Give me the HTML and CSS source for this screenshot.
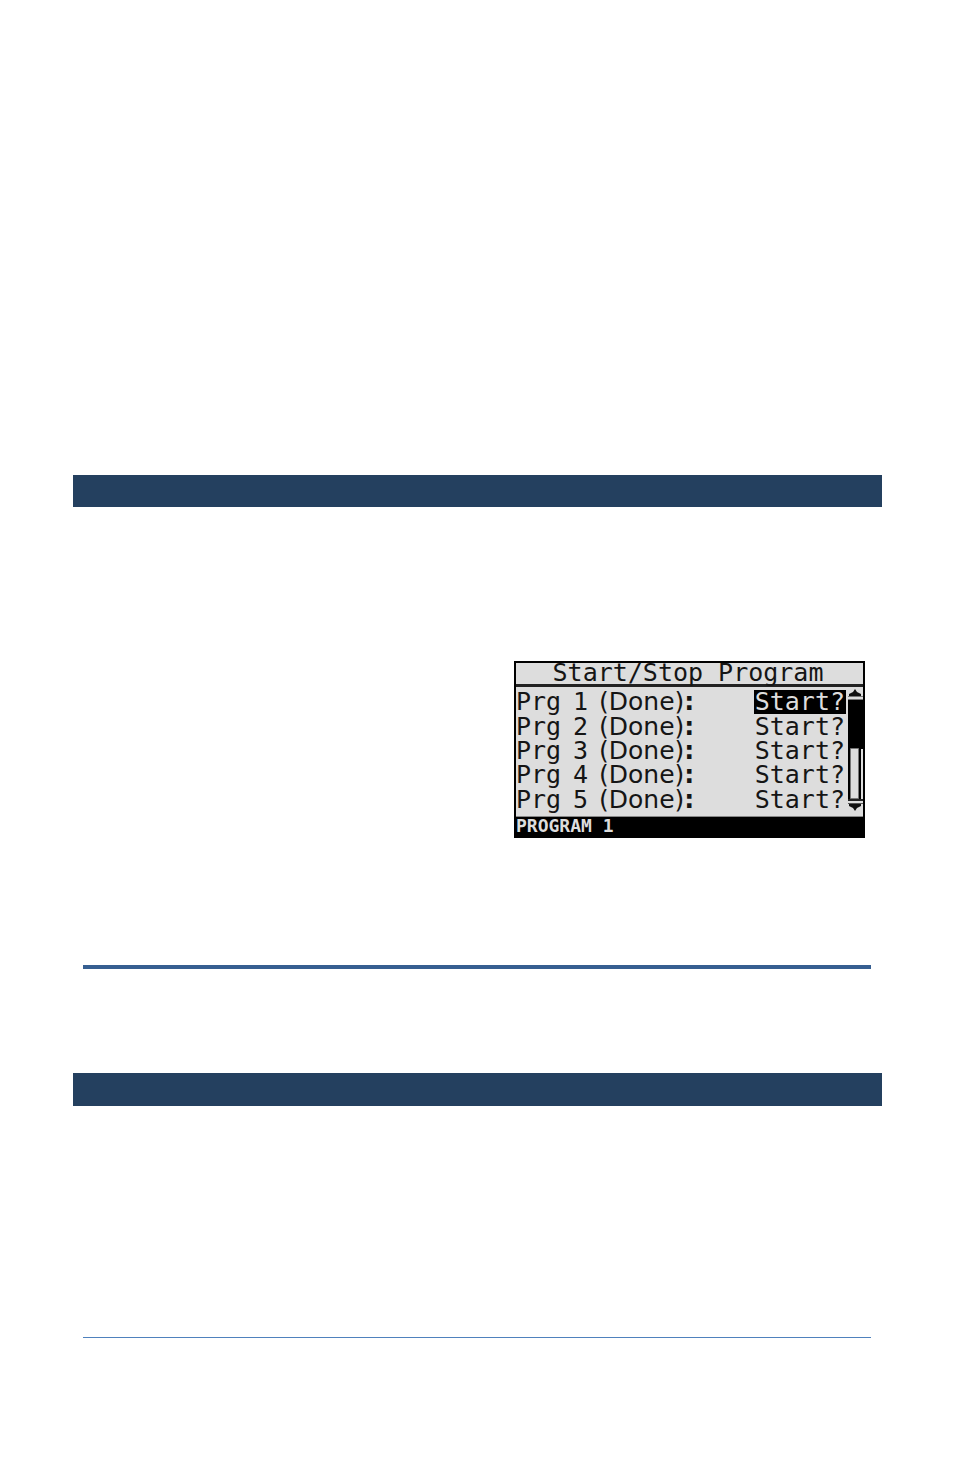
FILE: index.html
```html
<!DOCTYPE html>
<html lang="en">
<head>
<meta charset="utf-8">
<title>Start/Stop Program</title>
<link rel="stylesheet" href="styles.css">
</head>
<body>
<main class="page">
  <div class="band"></div>
  <section class="device" aria-label="Controller display">
    <h1 class="title">Start/Stop Program</h1>
    <div class="panel">
      <ul class="programs">
        <li class="row"><span class="name">Prg</span><span class="num">1</span><span class="state">(Done)<b>:</b></span><button class="action selected">Start?</button></li>
        <li class="row"><span class="name">Prg</span><span class="num">2</span><span class="state">(Done)<b>:</b></span><button class="action">Start?</button></li>
        <li class="row"><span class="name">Prg</span><span class="num">3</span><span class="state">(Done)<b>:</b></span><button class="action">Start?</button></li>
        <li class="row"><span class="name">Prg</span><span class="num">4</span><span class="state">(Done)<b>:</b></span><button class="action">Start?</button></li>
        <li class="row"><span class="name">Prg</span><span class="num">5</span><span class="state">(Done)<b>:</b></span><button class="action">Start?</button></li>
      </ul>
      <svg class="scroll" viewBox="0 0 16 129" aria-hidden="true">
        <path d="M8 2l2 3 4 2v2H2V7l4-2z" fill="#111"/>
        <path d="M1 9h15v1H1zM1 12h15v1H1z" fill="#777"/>
        <path d="M1 13h15v49h-2v51H1z" fill="#000"/>
        <path d="M3.500 61.500h8v50h-8z" fill="#ddd" stroke="#777"/>
        <path d="M1 112h15v2H1z" fill="#222"/>
        <path d="M1 116h15v1H1z" fill="#555"/>
        <path d="M2 117h12v2l-4 2-2 3-2-3-4-2z" fill="#111"/>
      </svg>
    </div>
    <p class="status">PROGRAM 1</p>
  </section>
  <hr class="rule">
  <div class="band second"></div>
  <hr class="rule thin">
</main>
</body>
</html>
```
FILE: styles.css
```css
* { box-sizing: border-box; }
body {
  margin: 0;
  background: #fff;
}
.page {
  display: flex;
  flex-direction: column;
  padding: 475px 72px 136px 73px;
}
.band {
  height: 32px;
  background: #24405f;
}
.device {
  align-self: flex-end;
  width: 351px;
  margin: 154px 17px 127px 0;
  border: 2px solid #000;
  background: #ddd;
  color: #151515;
  font: 25px/24px "DejaVu Sans Mono", monospace;
}
.title {
  margin: 0;
  padding-right: 3px;
  height: 24px;
  border-bottom: 3px solid #222;
  font: inherit;
  line-height: 20px;
  text-align: center;
}
.panel {
  display: flex;
  height: 130px;
  border-bottom: 1px solid #888;
}
.programs {
  flex: 1;
  display: grid;
  grid-template-rows: repeat(5, 1fr);
  margin: 0;
  padding: 3px 1px 4px 0;
  list-style: none;
}
.row {
  display: grid;
  grid-template-columns: 57px 26px 1fr auto;
  align-items: center;
}
.state { font-family: "DejaVu Sans", sans-serif; }
.action {
  height: 24px;
  padding: 0 1px;
  border: 0;
  background: none;
  color: inherit;
  font: inherit;
  line-height: 24px;
}
.selected {
  background: #000;
  color: #ddd;
}
.scroll {
  flex: none;
  width: 16px;
  height: 129px;
}
.status {
  margin: 0;
  height: 19px;
  background: #000;
  color: #ddd;
  font-size: 18px;
  font-weight: bold;
  line-height: 17px;
}
.rule {
  height: 4px;
  margin: 0 11px 0 10px;
  border: 0;
  background: #365f91;
}
.second {
  height: 33px;
  margin: 104px 0 231px;
}
.thin {
  height: 1px;
  background: #4f81bd;
}
```
